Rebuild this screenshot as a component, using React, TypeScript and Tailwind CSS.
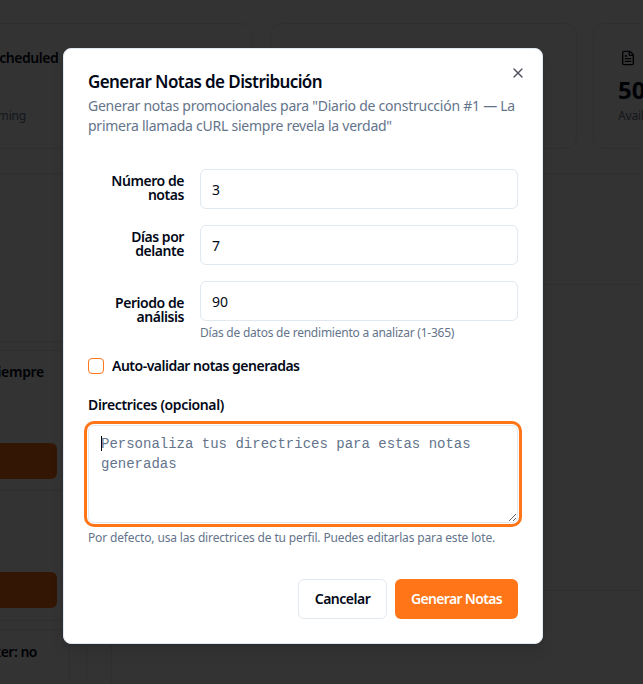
import React from "react";
import { X, FileText } from "lucide-react";

function Field({ label, value, hint }: { label: React.ReactNode; value: string; hint?: string }) {
  return (
    <div className="grid grid-cols-[96px_1fr] gap-x-4 items-start">
      <label className={`${hint ? "row-span-2" : ""} self-center pb-[2px] text-right text-sm font-semibold leading-[14px] tracking-[-0.45px] text-[#020817]`}>
        {label}
      </label>
      <input
        readOnly
        value={value}
        className="h-10 w-full rounded-md border border-[#e2e8f0] bg-white pl-[11px] pr-3 text-sm text-[#020817] outline-none"
      />
      {hint && <p className="col-start-2 mt-1 text-xs leading-4 tracking-[-0.23px] text-[#64748b]">{hint}</p>}
    </div>
  );
}

export default function App() {
  return (
    <div className="relative h-[684px] w-[643px] overflow-hidden bg-white font-['Noto_Sans',sans-serif]">
      {/* Page behind the dialog */}
      <div className="flex h-full flex-col">
        <div className="-ml-[53px] flex h-[173px] shrink-0 items-start pt-[23px]">
          <div className="h-[126px] w-[306px] shrink-0 rounded-xl border border-[#e2e8f0] px-6 pt-6">
            <div className="flex items-center gap-[4px]">
              <FileText className="size-4 text-[#020817]" />
              <p className="whitespace-nowrap text-sm font-semibold tracking-[-0.45px] text-[#020817]">Scheduled</p>
            </div>
            <p className="-ml-[3px] mt-[40px] text-xs tracking-[-0.15px] text-[#64748b]">Upcoming</p>
          </div>
          <div className="ml-[17px] h-[126px] w-[307px] shrink-0 rounded-xl border border-[#e2e8f0]" />
          <div className="ml-4 h-[126px] w-[240px] shrink-0 rounded-xl border border-[#e2e8f0] px-6 pt-6">
            <div className="flex items-center gap-2">
              <FileText className="ml-[2px] size-4 text-[#020817]" />
              <p className="whitespace-nowrap text-sm font-semibold text-[#020817]">Total</p>
            </div>
            <p className="mt-[6px] text-2xl font-bold leading-8 text-[#020817]">50</p>
            <p className="mt-[2px] text-xs leading-4 tracking-[-0.15px] text-[#64748b]">Available</p>
          </div>
        </div>
        <div className="flex flex-1 border-t border-[#e2e8f0]">
          <div className="flex w-[300px] shrink-0 flex-col">
            <div className="h-[168px] shrink-0 border-b border-[#e2e8f0]" />
            <div className="mt-2 h-[141px] shrink-0 border-y border-[#e2e8f0] pt-[11px]">
              <div className="flex h-5 w-[44px] justify-end whitespace-nowrap text-sm font-semibold leading-5 tracking-[-0.3px] text-[#020817]">
                <span className="shrink-0">La primera llamada cURL siempre</span>
              </div>
              <div className="-ml-4 mt-[61px] h-9 w-[73px] rounded-md bg-[#ff7518]" />
            </div>
            <div className="mt-2 h-[122px] shrink-0 border-b border-[#e2e8f0]">
              <div className="-ml-4 mt-[73px] h-9 w-[73px] rounded-md bg-[#ff7518]" />
            </div>
            <div className="mt-2 flex flex-1 border-t border-[#e2e8f0]">
              <div className="w-[70px] shrink-0 border-r border-[#e2e8f0] pt-[12px]">
                <div className="flex h-5 w-[37px] justify-end whitespace-nowrap text-sm font-semibold leading-5 tracking-[-0.5px] text-[#020817]">
                  <span className="shrink-0">Blocker: no</span>
                </div>
              </div>
              <div className="w-[17px] shrink-0 border-r border-[#e2e8f0]" />
              <div className="w-[25px] shrink-0 border-r border-[#e2e8f0]" />
            </div>
          </div>
          <div className="flex flex-1 flex-col">
            <div className="h-[111px] shrink-0 border-b border-[#e2e8f0]" />
            <div className="h-[306px] shrink-0 border-b border-[#e2e8f0]" />
          </div>
        </div>
      </div>

      {/* Overlay */}
      <div className="absolute inset-0 bg-black/80" />

      {/* Dialog */}
      <div className="absolute left-[63px] top-[48px] h-[596px] w-[480px] rounded-lg border border-[#e2e8f0] bg-white px-6 pt-6 shadow-lg">
        <X className="absolute right-[16px] top-[16px] size-4 text-[#020817] opacity-70" />
        <h2 className="text-[17px] font-semibold leading-[18px] tracking-[-0.6px] text-[#020817]">Generar Notas de Distribución</h2>
        <p className="mt-[5px] text-sm leading-5 tracking-[-0.25px] text-[#64748b]">
          Generar notas promocionales para "Diario de construcción #1 — La primera llamada cURL siempre revela la verdad"
        </p>
        <div className="mt-[33px] flex flex-col gap-4">
          <Field label="Número de notas" value="3" />
          <Field label="Días por delante" value="7" />
          <Field label="Periodo de análisis" value="90" hint="Días de datos de rendimiento a analizar (1-365)" />
        </div>
        <label className="mt-[15px] flex h-5 items-center gap-2 text-sm font-semibold tracking-[-0.5px] text-[#020817]">
          <span className="size-4 rounded-[4px] border border-[#ff7518]" />
          Auto-validar notas generadas
        </label>
        <p className="mt-[19px] text-sm font-semibold leading-5 tracking-[-0.36px] text-[#020817]">Directrices (opcional)</p>
        <div className="relative mt-[10px]">
          <textarea
            readOnly
            placeholder="Personaliza tus directrices para estas notas generadas"
            className="block h-[98px] w-full rounded-md border border-[#e2e8f0] bg-white px-3 py-2 font-['Liberation_Mono',monospace] text-sm leading-5 outline-[3px] outline-offset-1 outline-[#ff7518] placeholder:text-[#64748b]"
          />
          <span className="absolute left-[13px] top-[11px] h-[15px] w-px bg-[#020817]" />
        </div>
        <p className="mt-[7px] text-xs leading-4 tracking-[-0.15px] text-[#64748b]">
          Por defecto, usa las directrices de tu perfil. Puedes editarlas para este lote.
        </p>
        <div className="mt-[33px] flex justify-end gap-2">
          <button className="h-10 w-[89px] rounded-md border border-[#e2e8f0] bg-white text-sm font-semibold tracking-[-0.5px] text-[#020817]">Cancelar</button>
          <button className="h-10 w-[123px] rounded-md bg-[#ff7518] text-sm font-semibold tracking-[-0.65px] text-white">Generar Notas</button>
        </div>
      </div>
    </div>
  );
}
